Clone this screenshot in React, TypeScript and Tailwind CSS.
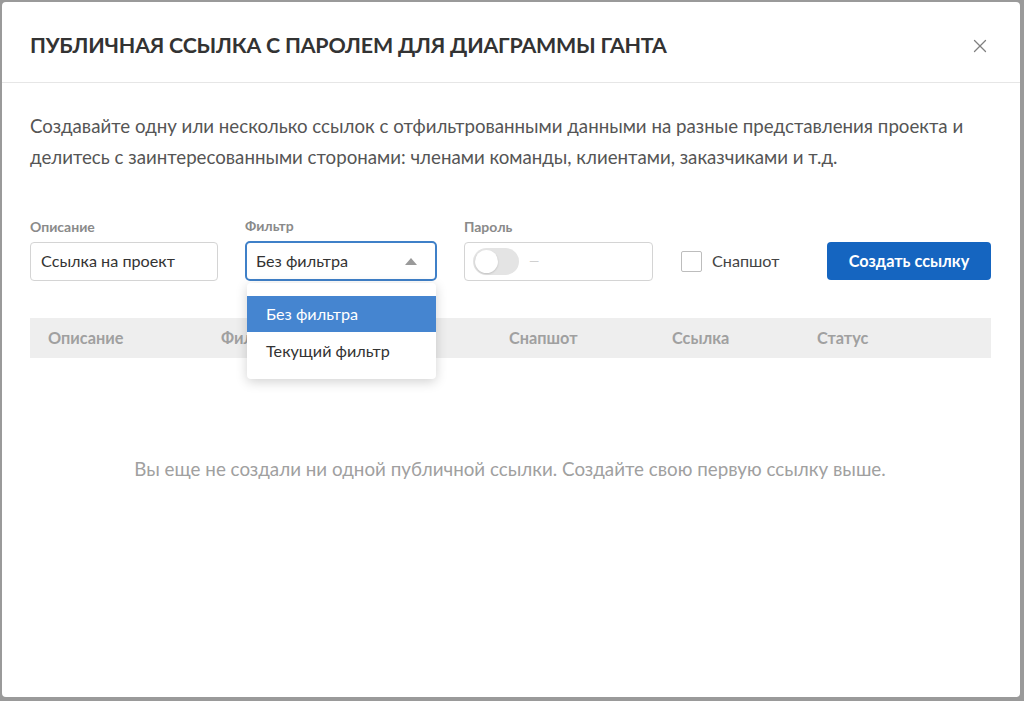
import { X } from 'lucide-react';

export default function App() {
    return (
        <div className="w-[1024px] h-[701px] bg-[#9a9a9a] pl-[2px] pt-[2px] pr-[4px] pb-[4px] overflow-hidden" style={{ fontFamily: 'Lato, "Noto Sans", sans-serif' }}>
            <div className="relative h-full bg-white rounded-[4px] flex flex-col">
                {/* Header */}
                <div className="h-[81px] flex items-center justify-between pt-[7px] pl-[28px] pr-[29px] border-b border-[#e6e6e6]">
                    <h2 className="text-[21.4px] font-bold text-[#333] tracking-[-0.2px]">ПУБЛИЧНАЯ ССЫЛКА С ПАРОЛЕМ ДЛЯ ДИАГРАММЫ ГАНТА</h2>
                    <X className="w-[22px] h-[22px] text-[#808080]" strokeWidth={1.4} />
                </div>

                <div className="px-[28px] pt-[28px]">
                    <p className="text-[18.7px] leading-[31px] text-[#555]">
                        Создавайте одну или несколько ссылок с отфильтрованными данными на разные представления проекта и делитесь с заинтересованными сторонами: членами команды, клиентами, заказчиками и т.д.
                    </p>

                    {/* Form row */}
                    <div className="flex items-end mt-[42px]">
                        <div className="w-[188px]">
                            <div className="text-[14px] font-bold text-[#8a8a8a] mb-[5px]">Описание</div>
                            <div className="h-[39px] border border-[#d4d4d4] rounded-[4px] flex items-center px-[10px] text-[16.2px] text-[#333]">Ссылка на проект</div>
                        </div>
                        <div className="w-[192px] ml-[27px]">
                            <div className="text-[14px] font-bold text-[#8a8a8a] mb-[5px]">Фильтр</div>
                            <div className="h-[40px] border-2 border-[#3f80c8] rounded-[5px] flex items-center justify-between pl-[9px] pr-[18px] text-[16.2px] text-[#333]">
                                <span>Без фильтра</span>
                                <span className="w-0 h-0 border-l-[6px] border-r-[6px] border-b-[7px] border-l-transparent border-r-transparent border-b-[#9a9a9a]" />
                            </div>
                        </div>
                        <div className="w-[189px] ml-[27px]">
                            <div className="text-[14px] font-bold text-[#8a8a8a] mb-[5px]">Пароль</div>
                            <div className="h-[39px] border border-[#d4d4d4] rounded-[4px] flex items-center px-[8px]">
                                <div className="w-[46px] h-[27px] rounded-full bg-[#e4e4e4] flex items-center px-[2px]">
                                    <div className="w-[23px] h-[23px] rounded-full bg-white shadow-[0_1px_2px_rgba(0,0,0,0.15)]" />
                                </div>
                                <span className="ml-[10px] text-[13px] text-[#d0d0d0]">—</span>
                            </div>
                        </div>
                        <label className="flex items-center h-[39px] ml-[28px]">
                            <span className="w-[21px] h-[21px] border border-[#bdbdbd] rounded-[2px] bg-white" />
                            <span className="ml-[10px] text-[16.2px] text-[#444]">Снапшот</span>
                        </label>
                        <button className="ml-auto mr-[1px] w-[164px] h-[38px] mb-[1px] bg-[#1565c0] rounded-[4px] text-white text-[16.3px] font-bold">Создать ссылку</button>
                    </div>

                    {/* Table header */}
                    <div className="mt-[37px] h-[40px] bg-[#eeeeee] flex items-center text-[16.3px] font-bold text-[#a0a0a0] mr-[1px]">
                        <span className="w-[191px] pl-[18px]">Описание</span>
                        <span className="w-[144px]">Фильтр</span>
                        <span className="w-[144px]">Пароль</span>
                        <span className="w-[163px]">Снапшот</span>
                        <span className="w-[145px]">Ссылка</span>
                        <span>Статус</span>
                    </div>

                    <div className="mt-[97px] text-center text-[18.8px] text-[#a0a0a0] pr-[2px]">
                        Вы еще не создали ни одной публичной ссылки. Создайте свою первую ссылку выше.
                    </div>
                </div>

                {/* Dropdown menu */}
                <div className="absolute left-[245px] top-[281px] w-[189px] bg-white rounded-[4px] shadow-[0_3px_12px_rgba(0,0,0,0.18)] pt-[13px] pb-[9px]">
                    <div className="h-[36px] bg-[#4585d0] text-white text-[16.2px] flex items-center pl-[19px]">Без фильтра</div>
                    <div className="h-[38px] text-[#333] text-[16.2px] flex items-center pl-[19px]">Текущий фильтр</div>
                </div>
            </div>
        </div>
    );
}
